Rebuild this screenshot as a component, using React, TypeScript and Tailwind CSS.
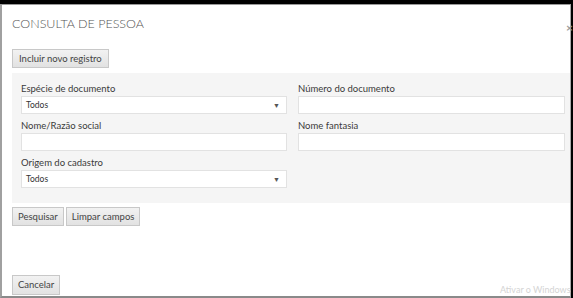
function Button({ label, className = '' }: { label: string; className?: string }) {
  return (
    <button
      className={`h-[19px] border border-[#c8c8c8] bg-gradient-to-b from-[#f2f2f2] to-[#e2e2e2] px-[5px] text-[9.5px] leading-none text-[#444] ${className}`}
    >
      {label}
    </button>
  )
}

function Field({ label, select }: { label: string; select?: boolean }) {
  return (
    <div className="flex flex-col">
      <span className="h-[14px] text-[9.5px] leading-[14px] text-[#3a3a3a]">{label}</span>
      <div className="flex h-[18px] items-center justify-between border border-[#e2e2e2] bg-white pl-[4px] pr-[6px]">
        {select && (
          <>
            <span className="text-[8.5px] text-[#333]">Todos</span>
            <span className="text-[7px] text-[#555]">▼</span>
          </>
        )}
      </div>
    </div>
  )
}

export default function App() {
  return (
    <div
      className="relative h-[298px] w-[573px] overflow-hidden bg-black pt-[4px]"
      style={{ fontFamily: 'Lato, "Open Sans", sans-serif' }}
    >
      <div className="flex h-[294px] w-[571px] flex-col border-t border-l-2 border-r border-b-2 border-t-[#999] border-l-[#a0a0a0] border-r-[#aaa] border-b-[#8a8a8a] bg-white pl-[10px]">
        <div className="relative mt-[9px] h-[20px]">
          <h1 className="text-[12.5px] font-light leading-[20px] text-[#555]">CONSULTA DE PESSOA</h1>
          <span className="absolute right-[-3px] top-[5px] text-[12px] font-bold text-[#999]">×</span>
        </div>

        <div className="mt-[10px]">
          <Button label="Incluir novo registro" className="h-[19px] px-[6px]" />
        </div>

        {/* filtros */}
        <div className="mt-[5px] grid grid-cols-[266px_267px] gap-x-[11px] gap-y-[5px] bg-[#f5f5f5] pb-[15px] pl-[9px] pr-[5px] pt-[9px]">
          <Field label="Espécie de documento" select />
          <Field label="Número do documento" />
          <Field label="Nome/Razão social" />
          <Field label="Nome fantasia" />
          <Field label="Origem do cadastro" select />
        </div>

        <div className="mt-[4px] flex gap-[2px]">
          <Button label="Pesquisar" />
          <Button label="Limpar campos" />
        </div>

        <div className="mt-auto mb-[1px]">
          <Button label="Cancelar" className="h-[20px]" />
        </div>
      </div>
      <span className="absolute left-[500px] top-[283px] whitespace-nowrap text-[9px] text-[#d4d4d4]">
        Ativar o Windows
      </span>
    </div>
  )
}
